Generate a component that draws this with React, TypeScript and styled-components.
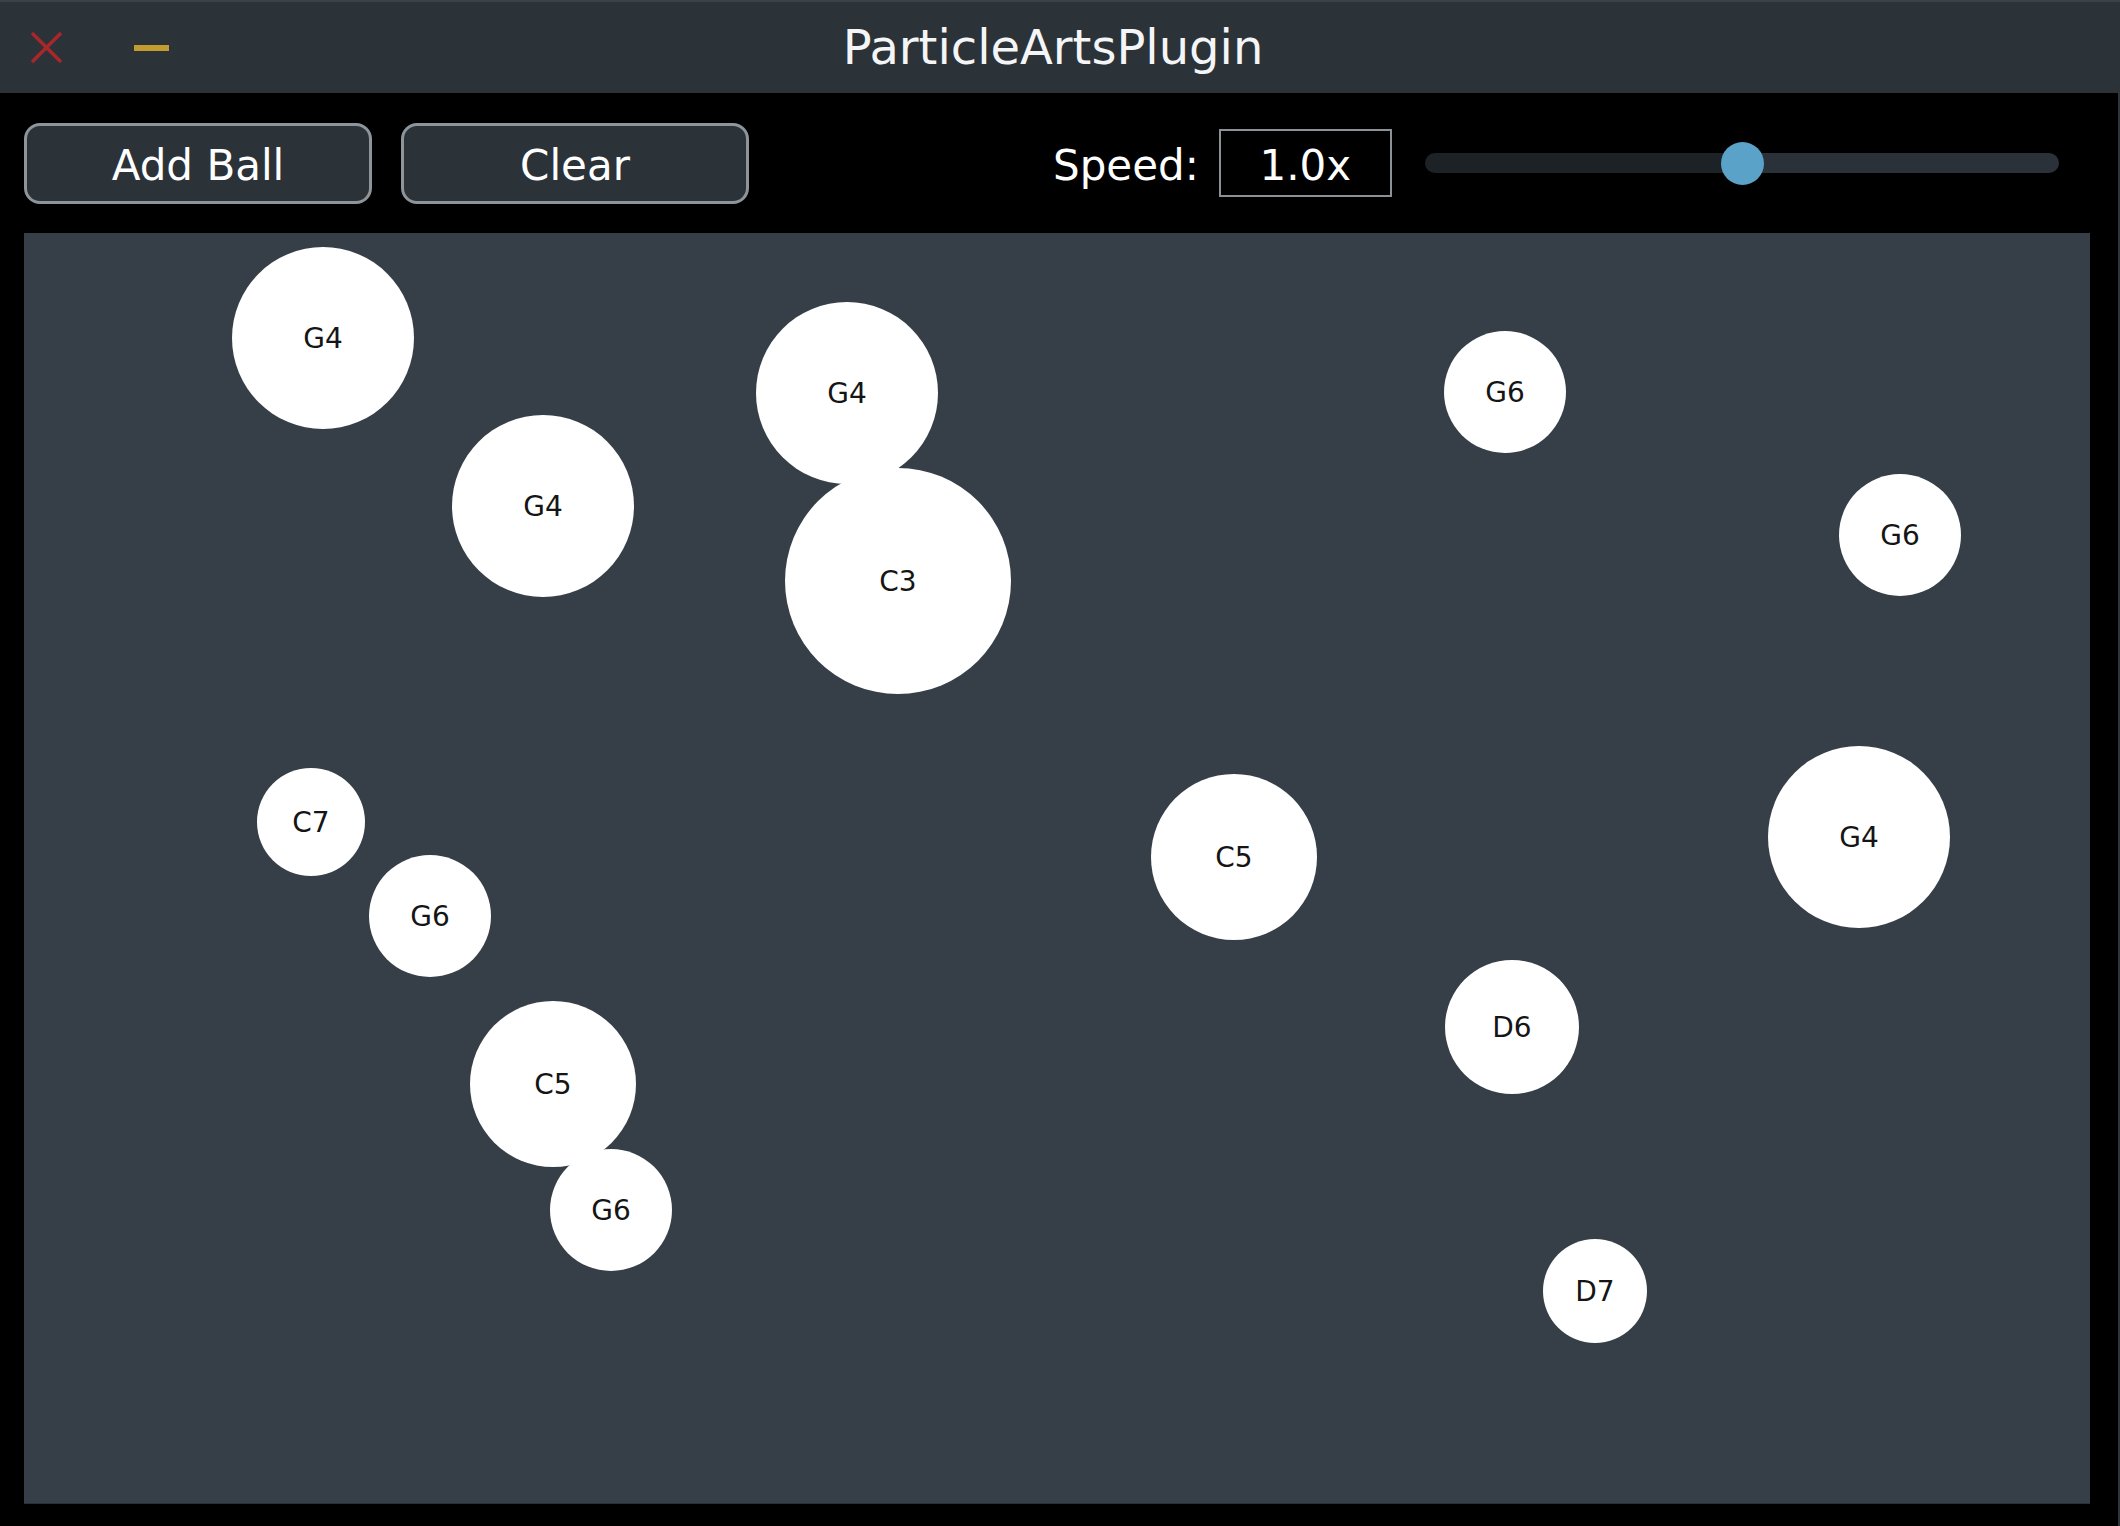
import styled, { createGlobalStyle } from "styled-components";

const GlobalStyle = createGlobalStyle`
  html, body {
    margin: 0;
    padding: 0;
    background: #000;
    overflow: hidden;
  }
  * {
    box-sizing: border-box;
  }
`;

const Window = styled.div`
  width: 2120px;
  height: 1526px;
  display: flex;
  flex-direction: column;
  background: #000;
  font-family: "DejaVu Sans", "Liberation Sans", sans-serif;
`;

const TitleBar = styled.div`
  height: 93px;
  flex-shrink: 0;
  display: grid;
  grid-template-columns: 1fr auto 1fr;
  align-items: center;
  padding-right: 14px;
  background: #2b3238;
  border-top: 2px solid #3a4249;
`;

const WindowControls = styled.div`
  display: flex;
  align-items: center;
  gap: 71px;
  padding-left: 30px;
`;

const Title = styled.div`
  color: #f4f5f6;
  font-size: 48px;
  line-height: 1;
  padding-bottom: 2px;
`;

const Body = styled.div`
  flex: 1;
  display: flex;
  flex-direction: column;
  border-right: 2px solid #2e353b;
`;

const Toolbar = styled.div`
  height: 140px;
  flex-shrink: 0;
  display: flex;
  align-items: center;
  padding-left: 24px;
`;

const Button = styled.button`
  width: 348px;
  height: 81px;
  margin-right: 29px;
  padding: 4px 0 0;
  border: 3px solid #8d959b;
  border-radius: 16px;
  background: #2b3238;
  color: #fff;
  font-family: "DejaVu Sans", "Liberation Sans", sans-serif;
  font-size: 42px;
  cursor: pointer;
`;

const SpeedLabel = styled.span`
  margin-left: 275px;
  padding-top: 4px;
  color: #fff;
  font-size: 42px;
`;

const SpeedBox = styled.div`
  width: 173px;
  height: 68px;
  margin-left: 20px;
  padding-top: 4px;
  display: flex;
  align-items: center;
  justify-content: center;
  border: 2px solid #8c9196;
  color: #fff;
  font-size: 42px;
`;

const Slider = styled.div`
  position: relative;
  width: 634px;
  height: 43px;
  margin-left: 33px;
  display: flex;
  align-items: center;
`;

const Track = styled.div<{ $value: number }>`
  width: 100%;
  height: 20px;
  border-radius: 10px;
  background: linear-gradient(
    to right,
    #1c2226 0%,
    #1c2226 ${(p) => p.$value * 100}%,
    #2a3138 ${(p) => p.$value * 100}%,
    #2a3138 100%
  );
`;

const Thumb = styled.div<{ $value: number }>`
  position: absolute;
  top: 0;
  left: calc(${(p) => p.$value * 100}% - 21px);
  width: 43px;
  height: 43px;
  border-radius: 50%;
  background: #5aa2c8;
`;

const CanvasWrap = styled.div`
  flex: 1;
  padding: 0 28px 22px 24px;
  display: flex;
`;

const Canvas = styled.div`
  position: relative;
  flex: 1;
  background: #363f47;
  border-bottom: 1px solid #2a3036;
  overflow: hidden;
`;

const Ball = styled.div.attrs<{ $x: number; $y: number; $r: number }>((p) => ({
  style: {
    left: p.$x - p.$r,
    top: p.$y - p.$r,
    width: p.$r * 2,
    height: p.$r * 2,
  },
}))<{ $x: number; $y: number; $r: number }>`
  position: absolute;
  border-radius: 50%;
  background: #fff;
  display: flex;
  align-items: center;
  justify-content: center;
  color: #151515;
  font-size: 28px;
`;

interface IBall {
  note: string;
  x: number;
  y: number;
  r: number;
}

// centres are relative to the canvas
const balls: IBall[] = [
  { note: "G4", x: 299, y: 105, r: 91 },
  { note: "G4", x: 519, y: 273, r: 91 },
  { note: "G4", x: 823, y: 160, r: 91 },
  { note: "C3", x: 874, y: 348, r: 113 },
  { note: "G6", x: 1481, y: 159, r: 61 },
  { note: "G6", x: 1876, y: 302, r: 61 },
  { note: "C7", x: 287, y: 589, r: 54 },
  { note: "G6", x: 406, y: 683, r: 61 },
  { note: "C5", x: 529, y: 851, r: 83 },
  { note: "G6", x: 587, y: 977, r: 61 },
  { note: "C5", x: 1210, y: 624, r: 83 },
  { note: "G4", x: 1835, y: 604, r: 91 },
  { note: "D6", x: 1488, y: 794, r: 67 },
  { note: "D7", x: 1571, y: 1058, r: 52 },
];

const CloseIcon = () => (
  <svg width="33" height="33" viewBox="0 0 33 33">
    <path
      d="M2 2 L31 31 M31 2 L2 31"
      stroke="#a8272b"
      strokeWidth="3.5"
      fill="none"
    />
  </svg>
);

const MinimiseIcon = () => (
  <svg width="35" height="6" viewBox="0 0 35 6">
    <rect x="0" y="0" width="35" height="6" fill="#c29c2f" />
  </svg>
);

const App = () => {
  const speed = 1.0;
  const sliderValue = speed / 2;

  return (
    <Window>
      <GlobalStyle />
      <TitleBar>
        <WindowControls>
          <CloseIcon />
          <MinimiseIcon />
        </WindowControls>
        <Title>ParticleArtsPlugin</Title>
        <div />
      </TitleBar>
      <Body>
        <Toolbar>
          <Button>Add Ball</Button>
          <Button>Clear</Button>
          <SpeedLabel>Speed:</SpeedLabel>
          <SpeedBox>{speed.toFixed(1)}x</SpeedBox>
          <Slider>
            <Track $value={sliderValue} />
            <Thumb $value={sliderValue} />
          </Slider>
        </Toolbar>
        <CanvasWrap>
          <Canvas>
            {balls.map((b, i) => (
              <Ball key={i} $x={b.x} $y={b.y} $r={b.r}>
                {b.note}
              </Ball>
            ))}
          </Canvas>
        </CanvasWrap>
      </Body>
    </Window>
  );
};

export default App;
